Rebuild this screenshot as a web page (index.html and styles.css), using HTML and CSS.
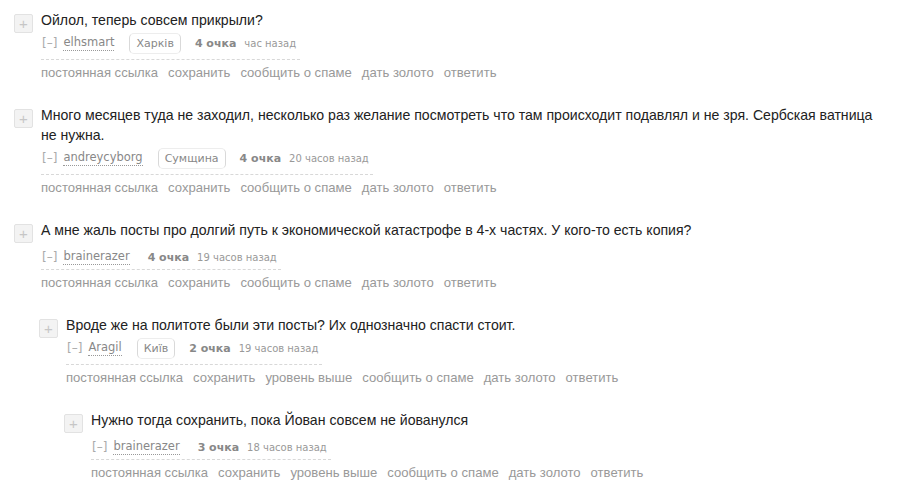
FILE: index.html
```html
<!DOCTYPE html>
<html lang="ru">
<head>
<meta charset="utf-8">
<title>Комментарии</title>
<link rel="stylesheet" href="styles.css">
</head>
<body>
<div class="comments">

  <div class="comment">
    <span class="expand">+</span>
    <div class="entry">
      <p class="md">Ойлол, теперь совсем прикрыли?</p>
      <div class="tagline">
        <span class="toggle">[–]</span>
        <a class="author">elhsmart</a>
        <span class="flair">Харків</span>
        <span class="score">4 очка</span>
        <span class="time">час назад</span>
      </div>
      <ul class="buttons">
        <li>постоянная ссылка</li>
        <li>сохранить</li>
        <li>сообщить о спаме</li>
        <li>дать золото</li>
        <li>ответить</li>
      </ul>
    </div>
  </div>

  <div class="comment">
    <span class="expand">+</span>
    <div class="entry">
      <p class="md">Много месяцев туда не заходил, несколько раз желание посмотреть что там происходит подавлял и не зря. Сербская ватница не нужна.</p>
      <div class="tagline">
        <span class="toggle">[–]</span>
        <a class="author">andreycyborg</a>
        <span class="flair">Сумщина</span>
        <span class="score">4 очка</span>
        <span class="time">20 часов назад</span>
      </div>
      <ul class="buttons">
        <li>постоянная ссылка</li>
        <li>сохранить</li>
        <li>сообщить о спаме</li>
        <li>дать золото</li>
        <li>ответить</li>
      </ul>
    </div>
  </div>

  <div class="comment">
    <span class="expand">+</span>
    <div class="entry">
      <p class="md">А мне жаль посты про долгий путь к экономической катастрофе в 4-х частях. У кого-то есть копия?</p>
      <div class="tagline">
        <span class="toggle">[–]</span>
        <a class="author">brainerazer</a>
        <span class="score">4 очка</span>
        <span class="time">19 часов назад</span>
      </div>
      <ul class="buttons">
        <li>постоянная ссылка</li>
        <li>сохранить</li>
        <li>сообщить о спаме</li>
        <li>дать золото</li>
        <li>ответить</li>
      </ul>

      <div class="comment child">
        <span class="expand">+</span>
        <div class="entry">
          <p class="md">Вроде же на политоте были эти посты? Их однозначно спасти стоит.</p>
          <div class="tagline">
            <span class="toggle">[–]</span>
            <a class="author">Aragil</a>
            <span class="flair">Київ</span>
            <span class="score">2 очка</span>
            <span class="time">19 часов назад</span>
          </div>
          <ul class="buttons">
            <li>постоянная ссылка</li>
            <li>сохранить</li>
            <li>уровень выше</li>
            <li>сообщить о спаме</li>
            <li>дать золото</li>
            <li>ответить</li>
          </ul>

          <div class="comment child">
            <span class="expand">+</span>
            <div class="entry">
              <p class="md">Нужно тогда сохранить, пока Йован совсем не йованулся</p>
              <div class="tagline">
                <span class="toggle">[–]</span>
                <a class="author">brainerazer</a>
                <span class="score">3 очка</span>
                <span class="time">18 часов назад</span>
              </div>
              <ul class="buttons">
                <li>постоянная ссылка</li>
                <li>сохранить</li>
                <li>уровень выше</li>
                <li>сообщить о спаме</li>
                <li>дать золото</li>
                <li>ответить</li>
              </ul>
            </div>
          </div>
        </div>
      </div>
    </div>
  </div>

</div>
</body>
</html>
```

FILE: styles.css
```css
html, body {
  margin: 0;
  padding: 0;
  background: #fff;
}

body {
  font-family: "Liberation Sans", Arial, sans-serif;
  color: #222;
}

.comments {
  padding: 10px 0 0 14px;
  width: 874px;
}

.comment {
  display: flex;
  align-items: flex-start;
  margin-bottom: 24px;
}

.comment.child {
  margin-top: 24px;
  margin-left: -2px;
  margin-bottom: 0;
}

.expand {
  flex: none;
  width: 17px;
  height: 17px;
  margin-top: 4px;
  margin-right: 8px;
  border: 1px solid #e2e2e2;
  border-radius: 2px;
  background: #f3f3f3;
  color: #c6c6c6;
  font-size: 15px;
  line-height: 17px;
  text-align: center;
}

.entry {
  flex: 1;
  min-width: 0;
}

.md {
  margin: 0;
  font-size: 14.1px;
  line-height: 20px;
  color: #222;
}

.tagline {
  display: inline-flex;
  align-items: center;
  box-sizing: border-box;
  height: 30px;
  padding: 5px 4px 0 0;
  border-bottom: 1px dashed #d8d8d8;
  font-family: "DejaVu Sans", Verdana, sans-serif;
  font-size: 10px;
  color: #888;
}

.tagline:has(.flair) {
  height: 30px;
  padding-top: 0;
  padding-bottom: 3px;
}

.toggle {
  margin-left: 1px;
  margin-right: 6px;
  font-size: 12px;
  color: #aaa;
}

.author {
  color: #888;
  font-size: 11.5px;
  border-bottom: 1px dotted #999;
  line-height: 13px;
  padding-bottom: 1px;
}

.flair {
  margin-left: 15px;
  padding: 0 6px;
  height: 19px;
  line-height: 19px;
  border: 1px solid #ededed;
  border-left-color: #d9d9d9;
  border-right-color: #d9d9d9;
  border-radius: 5px;
  font-size: 11px;
  color: #888;
}

.score {
  margin-left: 18px;
  font-weight: bold;
  font-size: 11px;
  color: #888;
}

.flair + .score {
  margin-left: 14px;
}

.time {
  margin-left: 8px;
  color: #999;
}

.buttons {
  list-style: none;
  margin: 0;
  padding: 4px 0 0;
  display: flex;
  gap: 10px;
  font-size: 13.1px;
  line-height: 17px;
  color: #999;
}
```
